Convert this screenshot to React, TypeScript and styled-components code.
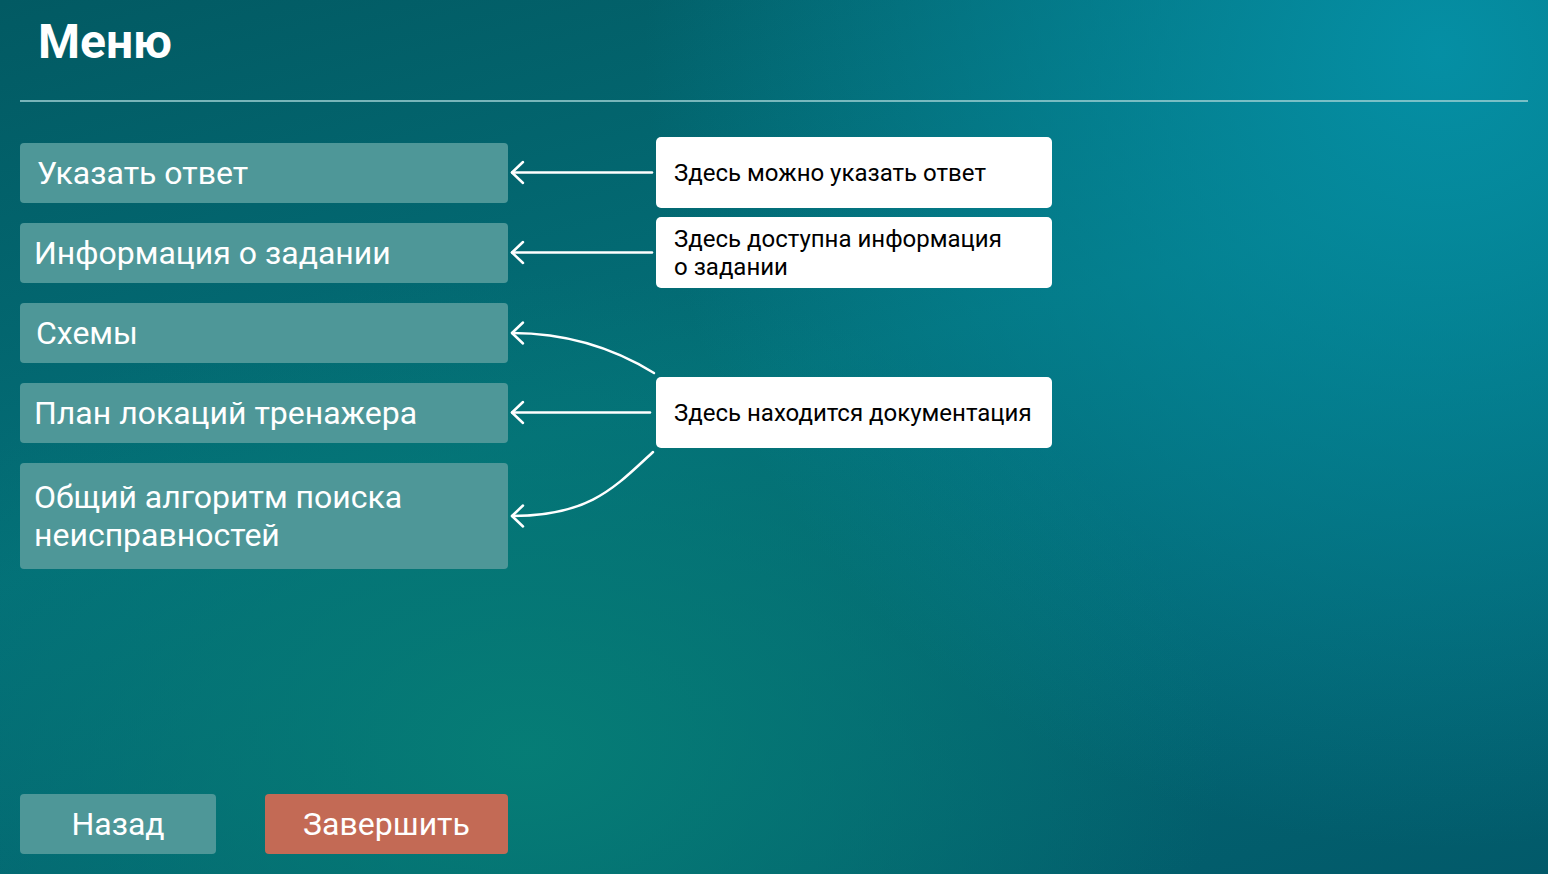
import React from "react";
import styled, { createGlobalStyle } from "styled-components";

const GlobalStyle = createGlobalStyle`
  html, body {
    margin: 0;
    padding: 0;
    height: 100%;
  }
  body {
    font-family: Roboto, "Noto Sans", "Liberation Sans", sans-serif;
    overflow: hidden;
  }
`;

const Page = styled.div`
  box-sizing: border-box;
  width: 100vw;
  height: 100vh;
  padding: 0 20px 20px;
  display: flex;
  flex-direction: column;
  color: #fff;
  background:
    radial-gradient(circle at 93% 6%, rgba(5, 145, 167, 0.95) 0%, rgba(5, 145, 167, 0) 48%),
    radial-gradient(ellipse 45% 55% at 34% 86%, rgba(6, 126, 118, 0.95) 0%, rgba(6, 126, 118, 0) 100%),
    linear-gradient(165deg, #025a63 0%, #036f78 45%, #025a6a 100%);
`;

const Header = styled.header`
  box-sizing: border-box;
  height: 100px;
  padding: 14px 18px 0;
`;

const Title = styled.h1`
  margin: 0;
  font-size: 48px;
  line-height: 56px;
  font-weight: 700;
`;

const Divider = styled.div`
  height: 2px;
  background: rgba(160, 210, 212, 0.75);
`;

const Board = styled.div`
  margin-top: 41px;
  display: grid;
  grid-template-columns: 488px 148px 396px;
  grid-template-rows: 60px 60px 60px 60px 106px;
  row-gap: 20px;
`;

const MenuButton = styled.button<{ row: number; indent: number }>`
  grid-column: 1;
  grid-row: ${(p) => p.row};
  box-sizing: border-box;
  margin: 0;
  padding: 0 14px 0 ${(p) => 14 + p.indent}px;
  border: none;
  border-radius: 4px;
  background: #4e9798;
  color: #fff;
  font-family: inherit;
  font-size: 32px;
  line-height: 38px;
  text-align: left;
  cursor: pointer;
`;

const Connectors = styled.svg`
  grid-column: 2;
  grid-row: 1 / -1;
  overflow: visible;
`;

const Callout = styled.div<{ row: number }>`
  grid-column: 3;
  grid-row: ${(p) => p.row};
  margin: -6px 0 -5px;
  box-sizing: border-box;
  padding: 0 18px;
  display: flex;
  align-items: center;
  background: #fff;
  border-radius: 5px;
  color: #000;
  font-size: 24px;
  line-height: 28px;
`;

const Footer = styled.div`
  margin-top: auto;
  display: flex;
  gap: 49px;
`;

const FooterButton = styled.button<{ width: number; tone: "teal" | "red" }>`
  width: ${(p) => p.width}px;
  height: 60px;
  margin: 0;
  padding: 0;
  border: none;
  border-radius: 4px;
  background: ${(p) => (p.tone === "red" ? "#c36a55" : "#4e9798")};
  color: #fff;
  font-family: inherit;
  font-size: 32px;
  cursor: pointer;
`;

const menu = [
  { label: "Указать ответ", indent: 3 },
  { label: "Информация о задании", indent: 0 },
  { label: "Схемы", indent: 2 },
  { label: "План локаций тренажера", indent: 0 },
  { label: "Общий алгоритм поиска\nнеисправностей", indent: 0 },
];

const Head = ({ x, y }: { x: number; y: number }) => (
  <path d={`M ${x + 11} ${y - 10.5} L ${x} ${y} L ${x + 11} ${y + 10.5}`} />
);

export default function App() {
  return (
    <>
      <GlobalStyle />
      <Page>
        <Header>
          <Title>Меню</Title>
        </Header>
        <Divider />
        <Board>
          {menu.map((item, i) => (
            <MenuButton key={item.label} row={i + 1} indent={item.indent}>
              {item.label.split("\n").map((line, j) => (
                <React.Fragment key={line}>
                  {j > 0 && <br />}
                  {line}
                </React.Fragment>
              ))}
            </MenuButton>
          ))}
          <Connectors
            width="148"
            height="426"
            viewBox="508 143 148 426"
            fill="none"
            stroke="#fff"
            strokeWidth="2.5"
            strokeLinecap="round"
            strokeLinejoin="round"
          >
            <path d="M 652 172.5 L 512 172.5" />
            <Head x={512} y={172.5} />
            <path d="M 652 252.5 L 512 252.5" />
            <Head x={512} y={252.5} />
            <path d="M 654 373 C 620 352, 575 333, 512 333" />
            <Head x={512} y={333} />
            <path d="M 650 412.5 L 512 412.5" />
            <Head x={512} y={412.5} />
            <path d="M 653 452 C 615 487, 590 516, 512 516" />
            <Head x={512} y={516} />
          </Connectors>
          <Callout row={1}>Здесь можно указать ответ</Callout>
          <Callout row={2}>
            Здесь доступна информация
            <br />о задании
          </Callout>
          <Callout row={4}>Здесь находится документация</Callout>
        </Board>
        <Footer>
          <FooterButton width={196} tone="teal">
            Назад
          </FooterButton>
          <FooterButton width={243} tone="red">
            Завершить
          </FooterButton>
        </Footer>
      </Page>
    </>
  );
}
